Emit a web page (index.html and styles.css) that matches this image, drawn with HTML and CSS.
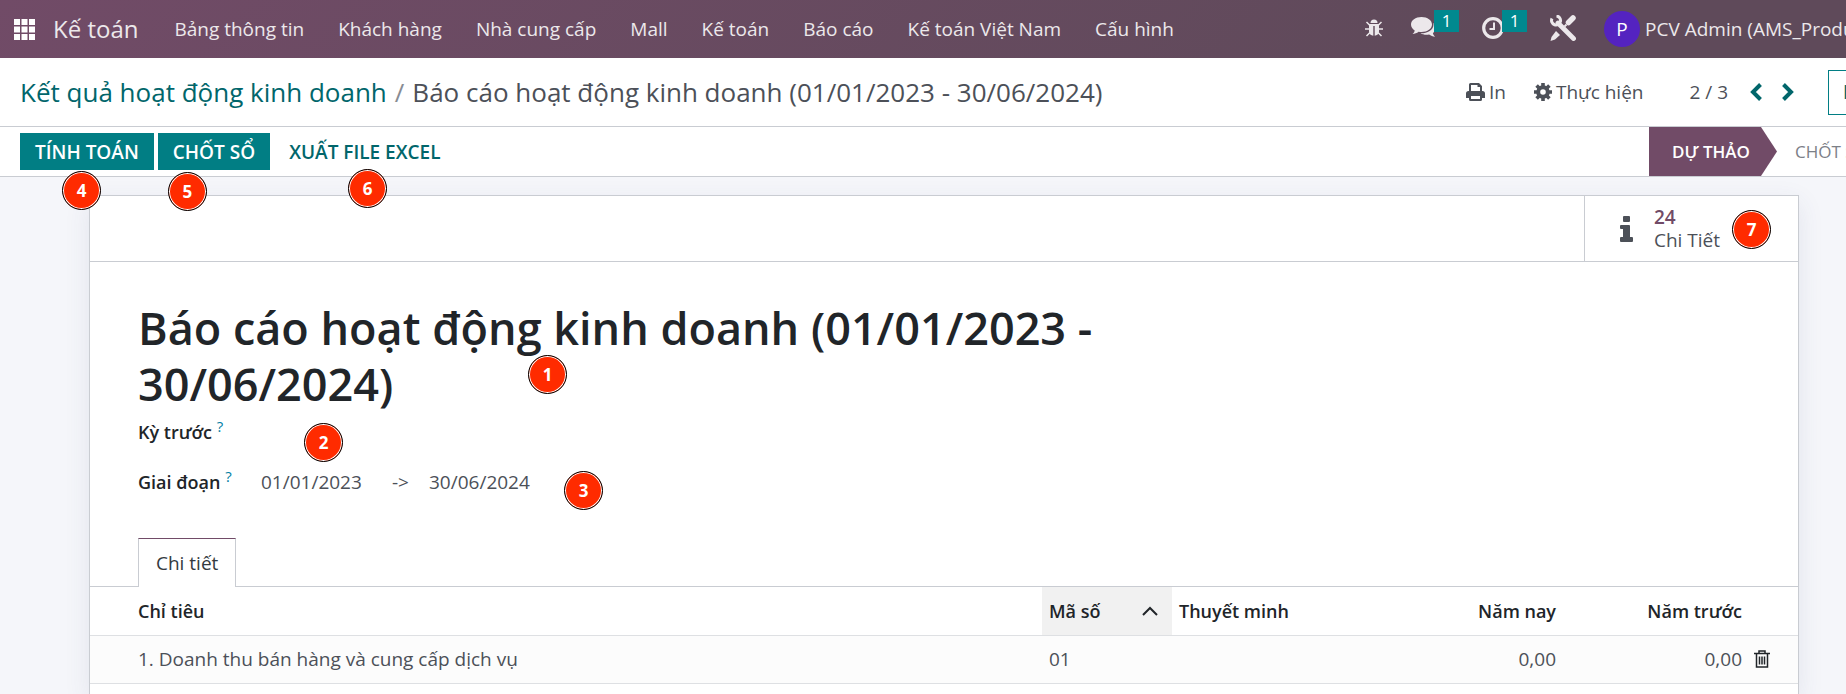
FILE: index.html
```html
<!DOCTYPE html>
<html lang="vi">
<head>
    <meta charset="UTF-8">
    <meta name="viewport" content="width=device-width, initial-scale=1.0">
    <title>Báo cáo hoạt động kinh doanh</title>
    <link rel="stylesheet" href="styles.css">
</head>
<body>
    <header class="navbar">
        <button class="apps" aria-label="Apps">
            <svg width="21" height="21" viewBox="0 0 21 21" fill="currentColor"><path d="M0 0h6v6H0zM7.500 0h6v6h-6zM15 0h6v6h-6zM0 7.500h6v6H0zM7.500 7.500h6v6h-6zM15 7.500h6v6h-6zM0 15h6v6H0zM7.500 15h6v6h-6zM15 15h6v6h-6z"/></svg>
        </button>
        <a class="brand" href="#">Kế toán</a>
        <nav class="menu">
            <a href="#">Bảng thông tin</a>
            <a href="#">Khách hàng</a>
            <a href="#">Nhà cung cấp</a>
            <a href="#">Mall</a>
            <a href="#">Kế toán</a>
            <a href="#">Báo cáo</a>
            <a href="#">Kế toán Việt Nam</a>
            <a href="#">Cấu hình</a>
        </nav>
        <div class="systray">
            <button class="tray-button" aria-label="Debug">
                <svg width="18" height="18" viewBox="0 0 18 18" fill="currentColor"><path d="M5.500 4a3.500 3.500 0 0 1 7 0z"/><path d="M4 5h10v7.500c0 2.500-2 4-4.300 4.200V7H8.300v9.700C6 16.500 4 15 4 12.500z"/><path d="M1.500 3 5 6.500M16.500 3 13 6.500M0 10h4M14 10h4M1.500 17 5 13.500M16.500 17 13 13.500" fill="none" stroke="currentColor" stroke-width="1.500"/></svg>
            </button>
            <button class="tray-button has-count" aria-label="Messages">
                <svg width="25" height="21" viewBox="0 0 25 21" fill="currentColor"><path d="M10.500 0C16.500 0 21 3.300 21 7.500S16.500 15 10.500 15c-1 0-2-.1-2.900-.3C5.800 16 3.800 16.800 1.500 17c1.200-1.100 2-2.200 2.200-3.600C1.400 12 0 9.900 0 7.500 0 3.300 4.500 0 10.500 0z"/><path d="M22.500 6c1.600 1.300 2.500 3 2.500 4.800 0 2.100-1.200 3.900-3.100 5.200.2 1.400 1 2.600 2.100 3.700-2.200-.2-4.200-.9-5.900-2.200-3 .6-6.300.2-8.600-1.200C16 16.500 22.500 13 22.500 7.500z"/></svg>
                <span class="count">1</span>
            </button>
            <button class="tray-button has-count" aria-label="Activities">
                <svg width="22" height="22" viewBox="0 0 22 22" fill="none" stroke="currentColor"><circle cx="11" cy="11" r="9.300" stroke-width="3.200"/><path d="M12 5.500V12H7.500" stroke-width="2"/></svg>
                <span class="count">1</span>
            </button>
            <button class="tray-button" aria-label="Tools">
                <svg width="26" height="26" viewBox="0 0 26 26" fill="none" stroke="currentColor"><path d="m8 8 15.500 15.500" stroke-width="4.800" stroke-linecap="round"/><path d="M2 3.500A4.500 4.500 0 1 0 6.500 1" stroke-width="3"/><path d="m18.500 7.500 4.500-4.500" stroke-width="5.500" stroke-linecap="round"/><path d="m14.500 11.500 2-2" stroke-width="2"/><path d="m6 16 4 4-5 4.500L.5 26l1-4z" fill="currentColor" stroke="none"/></svg>
            </button>
            <button class="user"><span class="avatar">P</span>PCV Admin (AMS_Production)</button>
        </div>
    </header>

    <div class="control-panel">
        <div class="breadcrumb">
            <a href="#">Kết quả hoạt động kinh doanh</a>
            <span class="separator">/</span>
            <span>Báo cáo hoạt động kinh doanh (01/01/2023 - 30/06/2024)</span>
        </div>
        <div class="actions">
            <button class="action">
                <svg width="19" height="18" viewBox="0 0 19 18" fill="currentColor"><path fill-rule="evenodd" d="M3 8V1.500Q3 0 4.500 0H13l3 3v5h.5Q19 8 19 10.500V15h-3v1.500q0 1.500-1.500 1.500h-10Q3 18 3 16.500V15H0v-4.500Q0 8 2.500 8zM5 8h9V4h-2.500V2H5zm0 5v3h9v-3z"/></svg>
                In
            </button>
            <button class="action">
                <svg width="18" height="18" viewBox="0 0 18 18"><circle cx="9" cy="9" r="4.800" fill="none" stroke="currentColor" stroke-width="4"/><path d="M9 0v4M9 14v4M0 9h4M14 9h4M2.600 2.600l3 3M12.400 12.400l3 3M2.600 15.400l3-3M12.400 5.600l3-3" stroke="currentColor" stroke-width="3.600"/></svg>
                Thực hiện
            </button>
            <span class="pager">2 / 3</span>
            <button class="pager-button" aria-label="Previous"><svg width="12" height="18" viewBox="0 0 12 18" fill="none" stroke="currentColor" stroke-width="4"><path d="m10.500 1.500-7.500 7.500 7.500 7.500"/></svg></button>
            <button class="pager-button" aria-label="Next"><svg width="12" height="18" viewBox="0 0 12 18" fill="none" stroke="currentColor" stroke-width="4"><path d="m1.500 1.500 7.500 7.500-7.500 7.500"/></svg></button>
            <button class="new-button">Mới</button>
        </div>
    </div>

    <div class="statusbar">
        <div class="status-buttons">
            <button class="button">TÍNH TOÁN<span class="marker marker-4">4</span></button>
            <button class="button">CHỐT SỔ<span class="marker marker-5">5</span></button>
            <button class="button button-link">XUẤT FILE EXCEL<span class="marker marker-6">6</span></button>
        </div>
        <div class="stages">
            <button class="stage stage-current">DỰ THẢO</button>
            <button class="stage">CHỐT SỔ</button>
        </div>
    </div>

    <main class="sheet">
        <div class="button-box">
            <button class="stat-button">
                <svg width="13" height="26" viewBox="0 0 13 26" fill="currentColor"><path d="M4 0h5q1 0 1 1v4q0 1-1 1H4Q3 6 3 5V1q0-1 1-1zM1 9h8q1 0 1 1v11h2q1 0 1 1v3q0 1-1 1H1q-1 0-1-1v-3q0-1 1-1h2v-8H1q-1 0-1-1v-2q0-1 1-1z"/></svg>
                <span class="stat-text"><strong>24</strong><span>Chi Tiết</span></span>
                <span class="marker marker-7">7</span>
            </button>
        </div>

        <div class="form">
            <h1 class="title">Báo cáo hoạt động kinh doanh (01/01/2023 - 30/06/2024)<span class="marker marker-1">1</span></h1>
            <div class="field">
                <span class="label">Kỳ trước <sup>?</sup></span>
                <span class="marker marker-2">2</span>
            </div>
            <div class="field">
                <span class="label">Giai đoạn <sup>?</sup></span>
                <span class="date">01/01/2023</span>
                <span class="arrow">-&gt;</span>
                <span>30/06/2024</span>
                <span class="marker marker-3">3</span>
            </div>
        </div>

        <div class="tabs">
            <button class="tab">Chi tiết</button>
        </div>

        <table class="lines">
            <thead>
                <tr>
                    <th class="col-name">Chỉ tiêu</th>
                    <th class="col-code"><span class="sort">Mã số <svg width="16" height="10" viewBox="0 0 16 10" fill="none" stroke="currentColor" stroke-width="2"><path d="m1 9 7-7 7 7"/></svg></span></th>
                    <th class="col-note">Thuyết minh</th>
                    <th class="col-now number">Năm nay</th>
                    <th class="col-before number">Năm trước</th>
                    <th class="col-delete"></th>
                </tr>
            </thead>
            <tbody>
                <tr>
                    <td>1. Doanh thu bán hàng và cung cấp dịch vụ</td>
                    <td>01</td>
                    <td></td>
                    <td class="number">0,00</td>
                    <td class="number">0,00</td>
                    <td><button class="delete" aria-label="Delete"><svg width="16" height="18" viewBox="0 0 16 18" fill="none" stroke="currentColor" stroke-width="1.500"><path d="M0 3.500h16M5 3.500V1h6v2.500M2.500 3.500V17h11V3.500M5.500 6.500v8M8 6.500v8M10.500 6.500v8"/></svg></button></td>
                </tr>
            </tbody>
        </table>
    </main>
</body>
</html>
```
FILE: styles.css
```css
* {
    box-sizing: border-box;
}

body {
    display: flex;
    flex-direction: column;
    font-family: "Open Sans", "Noto Sans", sans-serif;
    font-size: 19px;
    line-height: 24px;
    margin: 0;
    height: 100vh;
    overflow: hidden;
    color: #4c5058;
    background-color: #f5f6fa;
}

a {
    color: inherit;
    text-decoration: none;
}

button {
    font: inherit;
    color: inherit;
    background: none;
    border: none;
    padding: 0;
    cursor: pointer;
    white-space: nowrap;
}

svg {
    display: block;
    flex: none;
}

.navbar {
    display: flex;
    flex: none;
    align-items: center;
    height: 58px;
    padding-left: 14px;
    color: #ece8eb;
    background: linear-gradient(135deg, #714b67, #5f4a5a 80%);
}

.apps {
    color: white;
}

.brand {
    margin-left: 18px;
    font-size: 24px;
}

.menu {
    display: flex;
    gap: 34px;
    margin-left: 36px;
    white-space: nowrap;
}

.systray {
    display: flex;
    flex: none;
    align-items: center;
    gap: 28px;
    width: 481px;
    margin-left: auto;
}

.tray-button {
    position: relative;
    margin-bottom: 3px;
}

.has-count {
    margin-right: 18px;
}

.count {
    position: absolute;
    right: -23px;
    top: -7px;
    width: 25px;
    height: 22px;
    font-size: 17px;
    line-height: 22px;
    color: white;
    background-color: #00898f;
}

.user {
    display: flex;
    flex: none;
    align-items: center;
    gap: 5px;
}

.avatar {
    width: 36px;
    height: 36px;
    border-radius: 50%;
    line-height: 36px;
    color: white;
    background-color: #5423c0;
}

.control-panel {
    display: flex;
    flex: none;
    align-items: center;
    justify-content: space-between;
    height: 69px;
    padding-left: 20px;
    background-color: white;
    border-bottom: 1px solid #c9ccd2;
}

.breadcrumb {
    display: flex;
    gap: 8px;
    font-size: 26px;
    line-height: 32px;
    white-space: nowrap;
}

.breadcrumb a {
    color: #01666b;
}

.separator {
    color: #888c94;
}

.actions {
    display: flex;
    flex: none;
    align-items: center;
    width: 380px;
}

.action {
    display: flex;
    align-items: center;
    gap: 4px;
    margin-right: 28px;
    font-weight: 500;
}

.pager {
    margin-left: 18px;
    margin-right: 12px;
    white-space: nowrap;
}

.pager-button {
    padding: 0 10px;
    color: #01666b;
}

.new-button {
    margin-left: 24px;
    height: 45px;
    padding: 0 14px;
    font-weight: 600;
    color: #01666b;
    border: 1px solid #017e84;
}

.statusbar {
    display: flex;
    flex: none;
    justify-content: space-between;
    height: 50px;
    padding-left: 20px;
    background-color: white;
    border-bottom: 1px solid #c9ccd2;
}

.status-buttons {
    display: flex;
    align-items: center;
    gap: 4px;
}

.button {
    position: relative;
    height: 37px;
    padding: 0 15px;
    font-weight: 600;
    color: white;
    background-color: #017e84;
}

.button-link {
    color: #01666b;
    background: none;
}

.stages {
    display: flex;
    width: 197px;
}

.stage {
    flex: none;
    padding: 0 18px;
    font-size: 17px;
    font-weight: 500;
    color: #7c8087;
}

.stage-current {
    width: 128px;
    padding: 0 20px 0 16px;
    font-weight: 600;
    color: white;
    background-color: #714b67;
    clip-path: polygon(0 0, 112px 0, 100% 50%, 112px 100%, 0 100%);
}

.sheet {
    flex: 1;
    margin: 18px 47px 0 89px;
    background-color: white;
    border: 1px solid #c9ccd2;
    border-bottom: none;
    box-shadow: 0 8px 24px rgba(60, 70, 120, 0.1);
}

.button-box {
    display: flex;
    justify-content: flex-end;
    height: 66px;
    border-bottom: 1px solid #c9ccd2;
}

.stat-button {
    position: relative;
    display: flex;
    align-items: center;
    gap: 21px;
    width: 214px;
    padding-left: 35px;
    border-left: 1px solid #c9ccd2;
    line-height: 23px;
    text-align: left;
}

.stat-text {
    display: flex;
    flex-direction: column;
}

.stat-text strong {
    font-weight: 600;
    color: #714b67;
}

.form {
    padding: 38px 48px 26px;
}

.title {
    position: relative;
    max-width: 980px;
    margin: 0;
    font-size: 45px;
    font-weight: 600;
    line-height: 56px;
    color: #212529;
}

.field {
    position: relative;
    display: flex;
    height: 50px;
    padding-top: 8px;
}

.label {
    width: 123px;
    font-size: 18px;
    font-weight: 600;
    color: #212529;
    white-space: nowrap;
}

.label sup {
    font-size: 15px;
    font-weight: 400;
    line-height: 0;
    color: #0180a5;
}

.date {
    width: 131px;
}

.arrow {
    width: 37px;
}

.tabs {
    display: flex;
    padding-left: 48px;
    border-bottom: 1px solid #c9ccd2;
}

.tab {
    height: 49px;
    margin-bottom: -1px;
    padding: 0 17px;
    color: #343a40;
    background-color: white;
    border: 1px solid #c9ccd2;
    border-top-color: #714b67;
    border-bottom: none;
}

.lines {
    width: 100%;
    table-layout: fixed;
    border-collapse: collapse;
}

.lines th,
.lines td {
    height: 48px;
    padding: 0 7px;
    text-align: left;
    border-bottom: 1px solid #dee0e3;
}

.lines th {
    font-size: 18px;
    font-weight: 600;
    color: #212529;
}

.lines th:first-child,
.lines td:first-child {
    padding-left: 48px;
}

.lines td:last-child {
    padding-left: 5px;
}

.lines tbody tr {
    background-color: #fcfcfc;
}

.lines .number {
    text-align: right;
}

.col-code {
    width: 130px;
    background-color: #f1f1f1;
}

.col-note {
    width: 221px;
}

.col-now {
    width: 170px;
}

.col-before {
    width: 186px;
}

.col-delete {
    width: 49px;
}

.sort {
    display: flex;
    align-items: center;
    justify-content: space-between;
    padding-right: 7px;
}

.delete {
    display: block;
    color: #212529;
}

/* numbered callouts laid over the form */
.marker {
    position: absolute;
    width: 39px;
    height: 39px;
    border: 1px solid black;
    border-radius: 50%;
    box-shadow: inset 0 0 0 1px white;
    font-family: "Noto Sans", sans-serif;
    font-size: 17px;
    font-weight: 700;
    line-height: 37px;
    text-align: center;
    color: white;
    background-color: #ff2b00;
    z-index: 1;
}

.marker-1 {
    left: 390px;
    top: 55px;
}

.marker-2 {
    left: 166px;
    top: 11px;
}

.marker-3 {
    left: 426px;
    top: 9px;
}

.marker-4 {
    left: 42px;
    top: 38px;
}

.marker-5 {
    left: 10px;
    top: 39px;
}

.marker-6 {
    left: 74px;
    top: 36px;
}

.marker-7 {
    right: 27px;
    top: 14px;
}
```
